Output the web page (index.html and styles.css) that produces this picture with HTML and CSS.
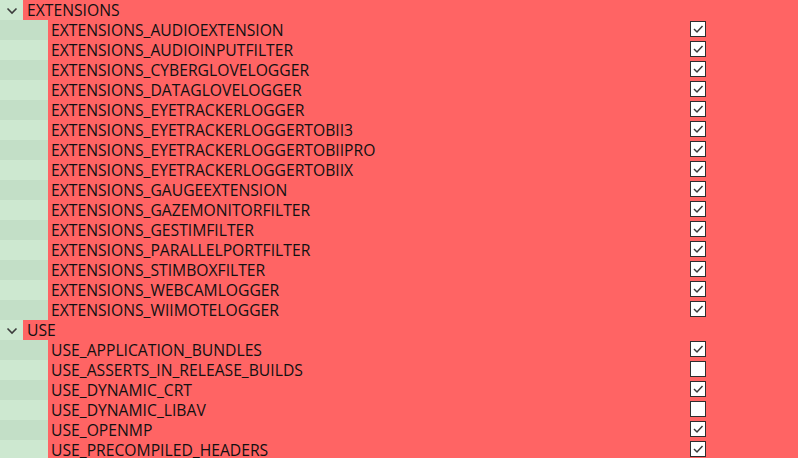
FILE: index.html
```html
<!DOCTYPE HTML>
<html>
<head>
    <title>CMake options</title>
    <link rel="stylesheet" href="styles.css">
</head>
<body>
    <div id="tree"></div>
    <script>
    var groups = [
        {name: "EXTENSIONS", items: [
            ["EXTENSIONS_AUDIOEXTENSION", 1],
            ["EXTENSIONS_AUDIOINPUTFILTER", 1],
            ["EXTENSIONS_CYBERGLOVELOGGER", 1],
            ["EXTENSIONS_DATAGLOVELOGGER", 1],
            ["EXTENSIONS_EYETRACKERLOGGER", 1],
            ["EXTENSIONS_EYETRACKERLOGGERTOBII3", 1],
            ["EXTENSIONS_EYETRACKERLOGGERTOBIIPRO", 1],
            ["EXTENSIONS_EYETRACKERLOGGERTOBIIX", 1],
            ["EXTENSIONS_GAUGEEXTENSION", 1],
            ["EXTENSIONS_GAZEMONITORFILTER", 1],
            ["EXTENSIONS_GESTIMFILTER", 1],
            ["EXTENSIONS_PARALLELPORTFILTER", 1],
            ["EXTENSIONS_STIMBOXFILTER", 1],
            ["EXTENSIONS_WEBCAMLOGGER", 1],
            ["EXTENSIONS_WIIMOTELOGGER", 1]
        ]},
        {name: "USE", items: [
            ["USE_APPLICATION_BUNDLES", 1],
            ["USE_ASSERTS_IN_RELEASE_BUILDS", 0],
            ["USE_DYNAMIC_CRT", 1],
            ["USE_DYNAMIC_LIBAV", 0],
            ["USE_OPENMP", 1],
            ["USE_PRECOMPILED_HEADERS", 1]
        ]}
    ];

    var chevron = "<svg width='12' height='8' viewBox='0 0 12 8'><polyline points='1.5,1.5 6,6 10.5,1.5' fill='none' stroke='#3c3c3c' stroke-width='1.6'/></svg>";
    var tick = "<svg width='14' height='14' viewBox='0 0 14 14'><polyline points='3,7 6,10 11.5,4' fill='none' stroke='#3a3a3a' stroke-width='1.5'/></svg>";

    function displayTree(){
        var output = '';
        for(var i=0; i < groups.length; i++){
            // group header row with the collapse arrow
            output += "\n<div class='row group'><div class='toggle'>" + chevron + "</div><div class='name'>" + groups[i].name + "</div></div>";
            for(var j=0; j < groups[i].items.length; j++){
                var item = groups[i].items[j];
                output += "\n<div class='row item'><div class='indent'></div><div class='name'>" + item[0] + "</div>";
                output += "<div class='check'>" + (item[1] ? tick : "") + "</div></div>";
            }
        }
        document.getElementById("tree").innerHTML = output;
    }
    displayTree();
    </script>
</body>
</html>
```

FILE: styles.css
```css
body{
    margin: 0px;
    background-color: #ff6464;
    font-family: "Open Sans", "Noto Sans", sans-serif;
    font-size: 15.7px;
    color: #111;
    overflow: hidden;
}
div.row{
    display: flex;
    height: 20px;
    line-height: 20px;
    background-color: #ff6464;
    --side: #cde8d0;
}
div.row:nth-child(even){
    --side: #c3dfc7;
}
div.toggle{
    width: 23px;
    flex: none;
    background-color: var(--side);
    display: flex;
    align-items: center;
    justify-content: center;
    padding-top: 1px;
    box-sizing: border-box;
}
div.indent{
    width: 48px;
    flex: none;
    background-color: var(--side);
}
div.group div.name{
    padding-left: 4px;
}
div.item div.name{
    width: 642px;
    flex: none;
    padding-left: 3px;
    box-sizing: border-box;
    white-space: nowrap;
}
div.check{
    width: 16px;
    height: 16px;
    margin-top: 1px;
    box-sizing: border-box;
    border: 1px solid #2e2e2e;
    background-color: #fff;
    display: flex;
    align-items: center;
    justify-content: center;
}
div.check svg{
    display: block;
}
```
